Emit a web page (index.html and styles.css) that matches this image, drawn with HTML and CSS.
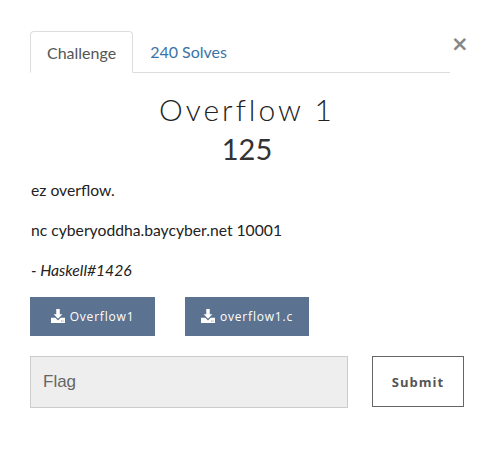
FILE: index.html
```html
<!DOCTYPE html>
<html>
<head>
<meta charset="utf-8">
<link rel="stylesheet" href="styles.css">
</head>
<body>
<div class="modal">
  <div class="tabs-row">
    <ul class="tabs">
      <li class="tab active">Challenge</li>
      <li class="tab link">240 Solves</li>
    </ul>
    <span class="close">&times;</span>
  </div>
  <h2 class="title">Overflow 1</h2>
  <h3 class="points">125</h3>
  <div class="desc">
    <p>ez overflow.</p>
    <p>nc cyberyoddha.baycyber.net 10001</p>
    <p><em>- Haskell#1426</em></p>
  </div>
  <div class="files">
    <a class="file-btn"><svg class="dl" viewBox="0 0 16 16" width="14" height="14"><path fill="#fff" d="M6 0h4v6h3l-5 5-5-5h3z"/><path fill="#fff" d="M0 10h5l3 3 3-3h5v6H0z"/><rect x="11.5" y="13.3" width="1" height="1" fill="#5b7290"/><rect x="13.3" y="13.3" width="1" height="1" fill="#5b7290"/></svg>Overflow1</a>
    <a class="file-btn"><svg class="dl" viewBox="0 0 16 16" width="14" height="14"><path fill="#fff" d="M6 0h4v6h3l-5 5-5-5h3z"/><path fill="#fff" d="M0 10h5l3 3 3-3h5v6H0z"/><rect x="11.5" y="13.3" width="1" height="1" fill="#5b7290"/><rect x="13.3" y="13.3" width="1" height="1" fill="#5b7290"/></svg>overflow1.c</a>
  </div>
  <div class="submit-row">
    <input class="flag" type="text" placeholder="Flag">
    <button class="submit">Submit</button>
  </div>
</div>
</body>
</html>
```
FILE: styles.css
```css
* { box-sizing: border-box; }
html, body { margin: 0; padding: 0; background: #fff; }
body { font-family: Lato, "Noto Sans", sans-serif; color: #212529; }
.modal { padding: 31px 0 0 30px; width: 495px; }
.tabs-row { display: flex; align-items: flex-start; }
.tabs { list-style: none; margin: 0; padding: 0; display: flex; flex: 0 0 420px; border-bottom: 1px solid #ddd; height: 42px; }
.tab { font-size: 16px; padding: 0 17px; line-height: 42px; height: 42px; }
.tab.active { color: #555; border: 1px solid #ddd; border-bottom-color: #fff; border-radius: 4px 4px 0 0; background: #fff; padding: 0 16px; }
.tab.link { color: #3a73a8; }
.close { font-family: "DejaVu Sans", sans-serif; font-size: 21px; font-weight: bold; color: #888; line-height: 24px; margin-left: 1px; margin-top: 1px; }
.title { font-family: Lato, sans-serif; font-weight: 300; font-size: 30px; letter-spacing: 3px; text-align: center; margin: 18px 0 0 0; width: 434px; line-height: 36px; color: #222; }
.points { font-family: Lato, sans-serif; font-weight: 400; font-size: 29px; text-align: center; margin: 5px 0 0 0; width: 434px; line-height: 34px; color: #333; }
.desc { margin-top: 14px; font-size: 15.7px; color: #222; }
.desc p { margin: 0 0 20px 1px; line-height: 20px; }
.desc p:last-child { margin-bottom: 0; }
.files { display: flex; gap: 30px; margin-top: 17px; }
.file-btn { display: flex; align-items: center; justify-content: center; gap: 5px; background: #5b7290; color: #fff; height: 39px; width: 125px; font-family: "Open Sans", sans-serif; font-size: 12px; letter-spacing: 0.8px; }
.file-btn + .file-btn { width: 124px; }
.dl { margin-top: -2px; }
.submit-row { display: flex; margin-top: 20px; gap: 24px; }
.flag { width: 318px; height: 52px; background: #eee; border: 1px solid #ccc; font-family: Arial, "Liberation Sans", sans-serif; font-size: 17px; padding: 0 12px; outline: none; }
.flag::placeholder { color: #666; }
.submit { width: 92px; height: 51px; background: #fff; border: 1px solid #666; font-family: "Open Sans", sans-serif; font-weight: bold; font-size: 13px; letter-spacing: 1px; color: #555; }
```
